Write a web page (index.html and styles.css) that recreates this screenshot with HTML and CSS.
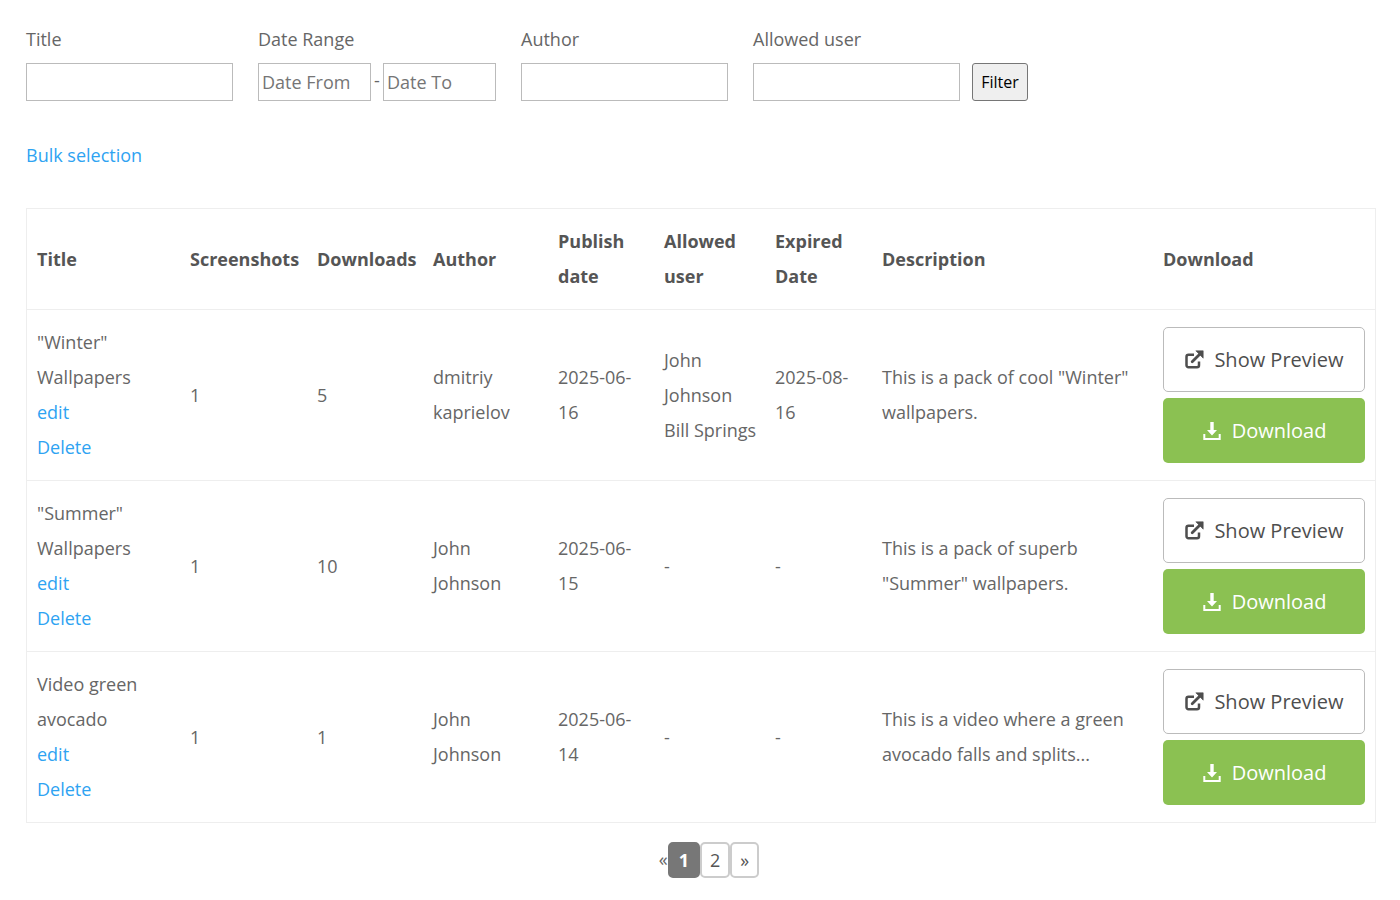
FILE: index.html
```html
<!DOCTYPE html>
<html lang="en">
<head>
<meta charset="UTF-8">
<meta name="viewport" content="width=device-width, initial-scale=1.0">
<title>Downloads</title>
<link rel="stylesheet" href="styles.css">
</head>
<body>
<svg class="sprite" width="0" height="0" aria-hidden="true">
    <symbol id="icon-preview" viewBox="0 0 20 20">
        <path d="M10 4.800H4.500a2 2 0 0 0-2 2v8.400a2 2 0 0 0 2 2h8.500a2 2 0 0 0 2-2V11.500" fill="none" stroke="currentColor" stroke-width="2.500"/>
        <path d="M8.200 11.800L16.500 3.500" fill="none" stroke="currentColor" stroke-width="2.800" stroke-linecap="round"/>
        <path d="M11.800 0.800h7.400v7.400z" fill="currentColor" stroke="currentColor" stroke-width="0.600" stroke-linejoin="round"/>
    </symbol>
    <symbol id="icon-download" viewBox="0 0 20 20">
        <path d="M8.300 1h3.400v8h3.300L10 14.500 5 9h3.300z" fill="currentColor"/>
        <path d="M2.300 13v5h15.400v-5" fill="none" stroke="currentColor" stroke-width="2"/>
    </symbol>
</svg>
<div class="container">
    <form class="filter">
        <div class="field">
            <label for="title">Title</label>
            <input type="text" id="title">
        </div>
        <div class="field">
            <label for="dateFrom">Date Range</label>
            <div class="dates">
                <input type="text" id="dateFrom" placeholder="Date From">
                <span>-</span>
                <input type="text" id="dateTo" placeholder="Date To" aria-label="Date To">
            </div>
        </div>
        <div class="field">
            <label for="author">Author</label>
            <input type="text" id="author">
        </div>
        <div class="field">
            <label for="allowedUser">Allowed user</label>
            <input type="text" id="allowedUser">
        </div>
        <button type="submit" class="filter-btn">Filter</button>
    </form>

    <a href="#" class="bulk">Bulk selection</a>

    <table class="packs">
        <colgroup>
            <col class="col-title">
            <col class="col-shots">
            <col class="col-count">
            <col class="col-author">
            <col class="col-publish">
            <col class="col-user">
            <col class="col-expired">
            <col>
            <col class="col-download">
        </colgroup>
        <thead>
            <tr>
                <th>Title</th>
                <th>Screenshots</th>
                <th>Downloads</th>
                <th>Author</th>
                <th>Publish date</th>
                <th>Allowed user</th>
                <th>Expired Date</th>
                <th>Description</th>
                <th>Download</th>
            </tr>
        </thead>
        <tbody>
            <tr>
                <td>"Winter" Wallpapers<br><a href="#">edit</a><br><a href="#">Delete</a></td>
                <td>1</td>
                <td>5</td>
                <td>dmitriy kaprielov</td>
                <td>2025-06-16</td>
                <td class="users">John Johnson<br>Bill Springs</td>
                <td>2025-08-16</td>
                <td>This is a pack of cool "Winter" wallpapers.</td>
                <td>
                    <a href="#" class="btn btn-preview"><svg><use href="#icon-preview"/></svg>Show Preview</a>
                    <a href="#" class="btn btn-download"><svg><use href="#icon-download"/></svg>Download</a>
                </td>
            </tr>
            <tr>
                <td>"Summer" Wallpapers<br><a href="#">edit</a><br><a href="#">Delete</a></td>
                <td>1</td>
                <td>10</td>
                <td>John Johnson</td>
                <td>2025-06-15</td>
                <td class="users">-</td>
                <td>-</td>
                <td>This is a pack of superb "Summer" wallpapers.</td>
                <td>
                    <a href="#" class="btn btn-preview"><svg><use href="#icon-preview"/></svg>Show Preview</a>
                    <a href="#" class="btn btn-download"><svg><use href="#icon-download"/></svg>Download</a>
                </td>
            </tr>
            <tr>
                <td>Video green avocado<br><a href="#">edit</a><br><a href="#">Delete</a></td>
                <td>1</td>
                <td>1</td>
                <td>John Johnson</td>
                <td>2025-06-14</td>
                <td class="users">-</td>
                <td>-</td>
                <td>This is a video where a green avocado falls and splits...</td>
                <td>
                    <a href="#" class="btn btn-preview"><svg><use href="#icon-preview"/></svg>Show Preview</a>
                    <a href="#" class="btn btn-download"><svg><use href="#icon-download"/></svg>Download</a>
                </td>
            </tr>
        </tbody>
    </table>

    <nav class="pagination">
        <span>«</span>
        <a href="#" class="current">1</a>
        <a href="#">2</a>
        <a href="#" class="next">»</a>
    </nav>
</div>
</body>
</html>
```
FILE: styles.css
```css
* {
    box-sizing: border-box;
}
body {
    margin: 0;
    font-family: "Open Sans", Arial, sans-serif;
    font-size: 18px;
    line-height: 35px;
    color: #666;
    background-color: #fff;
}
a {
    color: #2ea3f2;
    text-decoration: none;
}
.sprite {
    position: absolute;
}
.container {
    padding: 22px 24px 20px 26px;
}

/* filter form */
.filter {
    display: flex;
    align-items: flex-end;
    margin-bottom: 37px;
}
.field {
    margin-right: 25px;
}
.field:nth-of-type(4) {
    margin-right: 12px;
}
.field label {
    display: block;
    margin-bottom: 6px;
}
.field input {
    display: block;
    width: 207px;
    height: 38px;
    padding: 2px 3px;
    border: 1px solid #bbb;
    font-family: inherit;
    font-size: 18px;
    color: #4e4e4e;
}
.field input::placeholder {
    color: #757575;
}
.dates {
    display: flex;
    justify-content: space-between;
    width: 238px;
}
.dates input {
    width: 113px;
}
.filter-btn {
    width: 56px;
    height: 38px;
    padding: 0;
    border: 1px solid #767676;
    border-radius: 3px;
    background-color: #efefef;
    font-family: inherit;
    font-size: 16px;
    color: #000;
    cursor: pointer;
}
.bulk {
    display: inline-block;
    margin-bottom: 35px;
}

/* table */
.packs {
    width: 100%;
    table-layout: fixed;
    border: 1px solid #eee;
    border-collapse: separate;
    border-spacing: 0;
    text-align: left;
}
.packs th,
.packs td {
    padding: 15px 10px;
    vertical-align: middle;
}
.packs th {
    color: #555;
    font-weight: bold;
}
.packs td {
    border-top: 1px solid #eee;
}
.packs .users {
    padding-right: 4px;
}
.col-title {
    width: 153px;
}
.col-shots {
    width: 127px;
}
.col-count {
    width: 116px;
}
.col-author {
    width: 125px;
}
.col-publish {
    width: 106px;
}
.col-user {
    width: 111px;
}
.col-expired {
    width: 107px;
}
.col-download {
    width: 222px;
}
.btn {
    display: flex;
    align-items: center;
    justify-content: center;
    gap: 10px;
    height: 65px;
    border-radius: 5px;
    font-size: 20px;
}
.btn svg {
    width: 20px;
    height: 20px;
}
.btn-preview {
    margin-bottom: 6px;
    border: 1px solid #bbb;
    color: #4e4e4e;
}
.btn-download {
    background-color: #8bc152;
    color: #fff;
}
.btn:hover {
    opacity: 0.9;
}

/* pagination */
.pagination {
    display: flex;
    justify-content: center;
    margin-top: 19px;
    padding-left: 16px;
}
.pagination a {
    height: 36px;
    padding: 0 8px;
    border: 2px solid #ccc;
    border-radius: 5px;
    line-height: 32px;
    color: #555;
}
.pagination .current {
    padding: 0 9px;
    border-color: #777;
    background-color: #777;
    font-weight: bold;
    color: #fff;
}
```
